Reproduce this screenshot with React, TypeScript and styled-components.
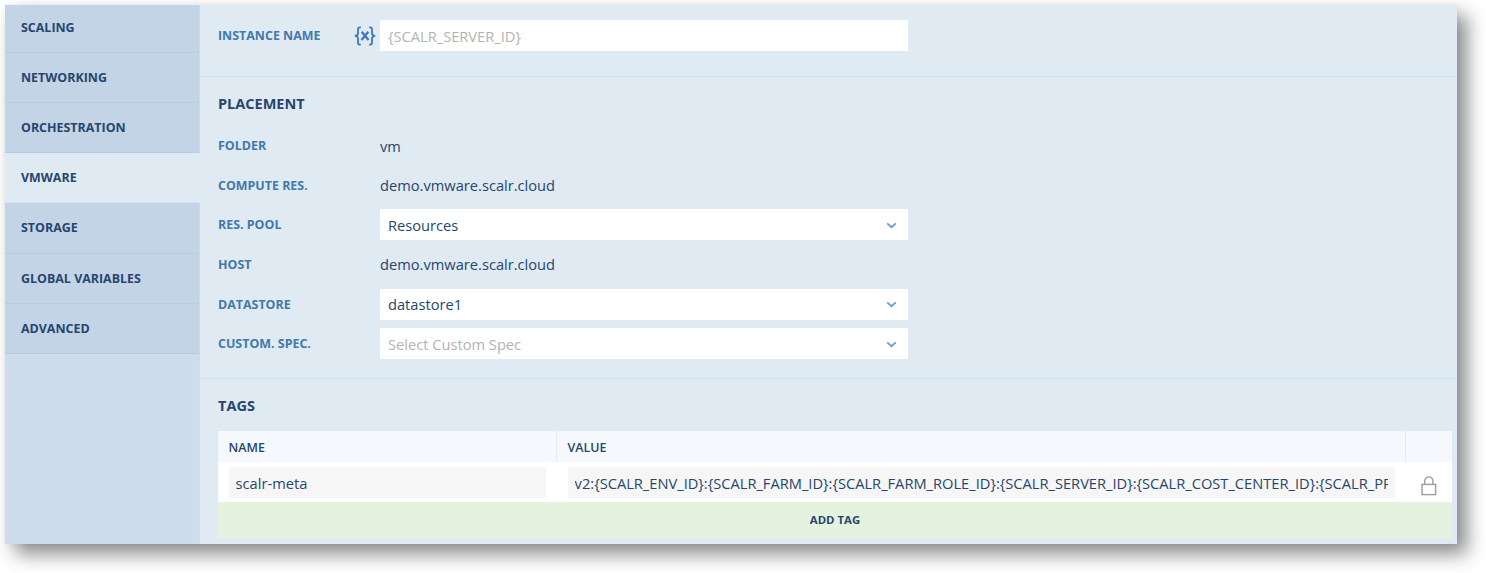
import React from 'react';
import styled, { createGlobalStyle } from 'styled-components';

const GlobalStyle = createGlobalStyle`
  *, *::before, *::after { box-sizing: border-box; }
  body {
    margin: 0;
    background: #fff;
    color: #26466d;
    font-family: "Open Sans", "Noto Sans", sans-serif;
    overflow: hidden;
  }
`;

const Page = styled.div`
  height: 573px;
  padding: 5px 29px 29px 5px;
`;

const Panel = styled.div`
  display: flex;
  height: 539px;
  background: #e0eaf3;
  box-shadow: 10px 10px 18px rgba(0, 0, 0, 0.46), 0 0 6px rgba(0, 0, 0, 0.05);
`;

const Sidebar = styled.nav`
  flex: none;
  width: 195px;
  background: #cdddec;
  border-right: 1px solid #c9dcee;
`;

const NavItem = styled.div<{ $active?: boolean; $first?: boolean }>`
  display: flex;
  align-items: center;
  height: ${(p) => (p.$first ? 47.8 : 50.2)}px;
  padding: 0 16px;
  padding-bottom: ${(p) => (p.$first ? 2 : 0)}px;
  margin-right: ${(p) => (p.$active ? -1 : 0)}px;
  background: ${(p) => (p.$active ? '#e0eaf3' : '#c2d4e6')};
  border-bottom: 1px solid ${(p) => (p.$active ? '#d6e4f0' : '#b0cde9')};
  font-size: 12.45px;
  font-weight: 700;
`;

const Content = styled.main`
  flex: 1;
  min-width: 0;
`;

const Section = styled.section<{ $height: number; $top: number }>`
  height: ${(p) => p.$height}px;
  padding: ${(p) => p.$top}px 5px 0 18px;
  & + & { border-top: 1px solid #cde1f4; }
`;

const Heading = styled.h2`
  margin: 0;
  font-size: 14.5px;
  line-height: 20px;
  font-weight: 700;
`;

const Fields = styled.div`
  display: flex;
  flex-direction: column;
  gap: 8.65px;
  margin-top: 16px;
`;

const Field = styled.div`
  display: flex;
  align-items: center;
  height: 31px;
`;

const Label = styled.label`
  width: 136px;
  color: #4279aa;
  font-size: 12.45px;
  line-height: 17px;
  font-weight: 700;
`;

const IconSlot = styled.span`
  display: flex;
  width: 26px;
`;

const Value = styled.span`
  font-size: 14.66px;
  line-height: 20px;
`;

const Control = styled.div<{ $muted?: boolean }>`
  display: flex;
  align-items: center;
  justify-content: space-between;
  width: 528px;
  height: 31px;
  padding: 0 11px 0 8px;
  background: #fff;
  color: ${(p) => (p.$muted ? '#b3b3b3' : '#26466d')};
  font-size: 14.66px;
  line-height: 20px;
`;

const Table = styled.div`
  margin-top: 15px;
`;

const Row = styled.div<{ $head?: boolean }>`
  display: grid;
  grid-template-columns: 339px 849px 1fr;
  height: ${(p) => (p.$head ? 31 : 40)}px;
  background: ${(p) => (p.$head ? '#f5f9fd' : '#fff')};
`;

const HeadCell = styled.div`
  display: flex;
  align-items: center;
  padding: 2px 0 0 10.5px;
  font-size: 12.45px;
  line-height: 17px;
  font-weight: 600;
  border-right: 1px solid #e2eaf6;
  &:last-child { border-right: 0; }
`;

const Cell = styled.div`
  padding: 5px 11px 4px 10.6px;
`;

const LockCell = styled.div`
  display: flex;
  justify-content: center;
  padding-top: 14px;
`;

const ReadOnly = styled.div`
  height: 31px;
  padding: 1px 7px 0;
  background: #f6f6f6;
  font-size: 14.66px;
  line-height: 31px;
`;

const Clip = styled.div`
  overflow: hidden;
  white-space: nowrap;
`;

const AddTag = styled.div`
  display: flex;
  align-items: center;
  justify-content: center;
  height: 36px;
  padding-bottom: 1px;
  background: #e4f3e0;
  font-size: 11.4px;
  line-height: 16px;
  font-weight: 700;
`;

const Chevron = () => (
  <svg width="11" height="8" viewBox="0 0 11 8" fill="none">
    <path d="M1.2 2.4 L5.5 6.2 L9.8 2.4" stroke="#6f9ccb" strokeWidth="1.9" />
  </svg>
);

const VariableIcon = () => (
  <svg width="22" height="20" viewBox="0 0 22 20" fill="none" stroke="#3f78b8" strokeWidth="1.8">
    <path d="M6.8 1.4 H6 Q4 1.4 4 3.6 V7 Q4 9.9 .8 9.9 Q4 9.9 4 12.8 V16.4 Q4 18.6 6 18.6 H6.8" />
    <path d="M15.2 1.4 H16 Q18 1.4 18 3.6 V7 Q18 9.9 21.2 9.9 Q18 9.9 18 12.8 V16.4 Q18 18.6 16 18.6 H15.2" />
    <path d="M7.7 5.8 L14.5 14 M14.3 5.8 L7.5 14" strokeWidth="2.3" />
  </svg>
);

const Lock = () => (
  <svg width="16" height="20" viewBox="0 0 16 20" fill="none" stroke="#9d9d9d" strokeWidth="1.4">
    <rect x="1" y="8.4" width="13.6" height="10.2" />
    <path d="M3.7 8.4 V5 A4.1 4.1 0 0 1 11.9 5 V8.4" />
  </svg>
);

const nav = ['SCALING', 'NETWORKING', 'ORCHESTRATION', 'VMWARE', 'STORAGE', 'GLOBAL VARIABLES', 'ADVANCED'];

const placement = [
  { label: 'FOLDER', text: 'vm' },
  { label: 'COMPUTE RES.', text: 'demo.vmware.scalr.cloud' },
  { label: 'RES. POOL', text: 'Resources', select: true },
  { label: 'HOST', text: 'demo.vmware.scalr.cloud' },
  { label: 'DATASTORE', text: 'datastore1', select: true },
  { label: 'CUSTOM. SPEC.', text: 'Select Custom Spec', select: true, muted: true },
];

export default function App() {
  return (
    <Page>
      <GlobalStyle />
      <Panel>
        <Sidebar>
          {nav.map((name, i) => (
            <NavItem key={name} $first={i === 0} $active={name === 'VMWARE'}>{name}</NavItem>
          ))}
        </Sidebar>
        <Content>
          <Section $height={71} $top={15}>
            <Field>
              <Label>INSTANCE NAME</Label>
              <IconSlot><VariableIcon /></IconSlot>
              <Control $muted>{'{SCALR_SERVER_ID}'}</Control>
            </Field>
          </Section>
          <Section $height={302} $top={17}>
            <Heading>PLACEMENT</Heading>
            <Fields>
              {placement.map((f) => (
                <Field key={f.label}>
                  <Label>{f.label}</Label>
                  <IconSlot />
                  {f.select ? (
                    <Control $muted={f.muted}>{f.text}<Chevron /></Control>
                  ) : (
                    <Value>{f.text}</Value>
                  )}
                </Field>
              ))}
            </Fields>
          </Section>
          <Section $height={166} $top={17}>
            <Heading>TAGS</Heading>
            <Table>
              <Row $head>
                <HeadCell>NAME</HeadCell>
                <HeadCell>VALUE</HeadCell>
                <HeadCell />
              </Row>
              <Row>
                <Cell><ReadOnly><Clip>scalr-meta</Clip></ReadOnly></Cell>
                <Cell>
                  <ReadOnly>
                    <Clip>
                      {'v2:{SCALR_ENV_ID}:{SCALR_FARM_ID}:{SCALR_FARM_ROLE_ID}:{SCALR_SERVER_ID}:{SCALR_COST_CENTER_ID}:{SCALR_PROJECT_ID}'}
                    </Clip>
                  </ReadOnly>
                </Cell>
                <LockCell><Lock /></LockCell>
              </Row>
              <AddTag>ADD TAG</AddTag>
            </Table>
          </Section>
        </Content>
      </Panel>
    </Page>
  );
}
